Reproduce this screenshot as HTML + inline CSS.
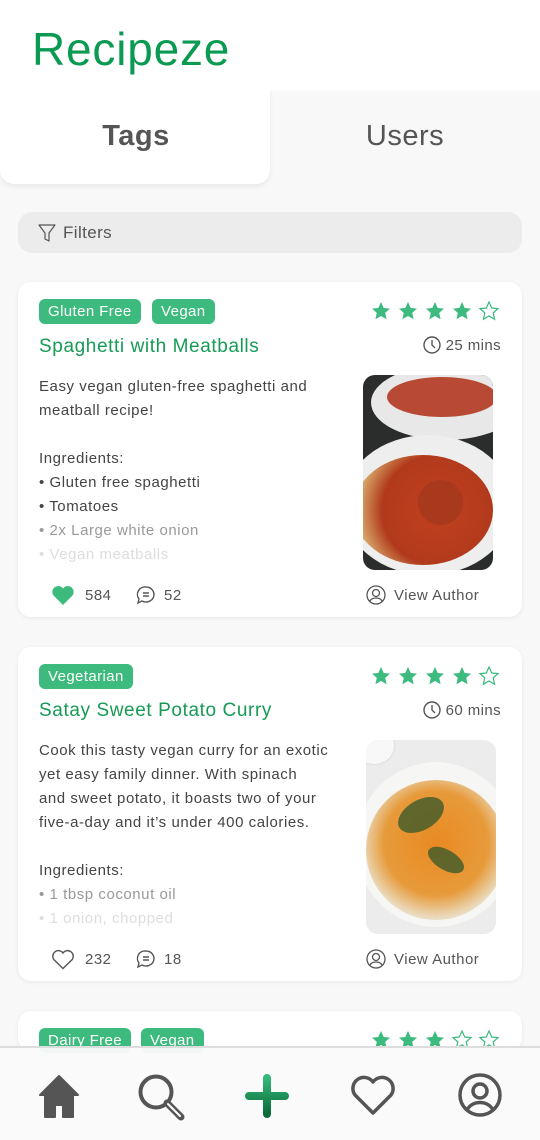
<!DOCTYPE html>
<html><head><meta charset="utf-8">
<style>
*{margin:0;padding:0;box-sizing:border-box}
html{width:540px;height:1140px;overflow:hidden}
body{width:540px;height:1140px;overflow:hidden;background:#f8f8f8;font-family:"Liberation Sans",sans-serif;position:relative;color:#444}
.abs{position:absolute}
.hdr{left:0;top:0;width:540px;height:92px;background:#fff}
.logo{left:32px;top:22px;font-size:46px;color:#0a9a52;letter-spacing:0.8px;font-weight:normal}
.tabbar{left:0;top:92px;width:540px;height:100px;background:#f8f8f8;box-shadow:0 -1px 2px rgba(0,0,0,0.04)}
.tab1{left:0;top:88px;width:270px;height:96px;background:#fff;border-radius:0 0 14px 14px;box-shadow:0 3px 5px rgba(0,0,0,0.06)}
.t{font-size:29px;color:#555;text-align:center;width:270px;letter-spacing:0.5px}
.filter{left:18px;top:212px;width:504px;height:41px;background:#ececec;border-radius:14px}
.card{left:18px;width:504px;background:#fff;border-radius:13px;box-shadow:0 1px 4px rgba(0,0,0,0.07)}
.tag{position:absolute;height:25px;background:#3dba7e;color:#fff;border-radius:6px;font-size:15px;line-height:25px;padding:0 9px;letter-spacing:0.4px}
.title{position:absolute;left:21px;font-size:19px;color:#169b55;letter-spacing:0.6px;white-space:nowrap}
.desc{position:absolute;left:21px;font-size:15px;line-height:24px;color:#444;white-space:nowrap;letter-spacing:0.55px}
.fade1{color:#999}.fade2{color:#ddd}
.stars{position:absolute;left:353px;top:19px}
.time{position:absolute;right:21px;font-size:15px;color:#555;display:flex;align-items:center;gap:5px;letter-spacing:0.4px}
.foot{position:absolute;font-size:15px;color:#555;display:flex;align-items:center;gap:8px;letter-spacing:0.5px}
.img{position:absolute;border-radius:12px;overflow:hidden}
.nav{left:0;top:1046px;width:540px;height:94px;background:rgba(250,250,250,0.96);border-top:2px solid #ddd}
</style></head><body>
<div class="abs hdr"></div>
<div class="abs logo">Recipeze</div>
<div class="abs tabbar"></div>
<div class="abs tab1"></div>
<div class="abs t" style="left:1px;top:120px;font-weight:bold">Tags</div>
<div class="abs t" style="left:270px;top:120px">Users</div>
<div class="abs filter">
<svg class="abs" style="left:20px;top:12px" width="18" height="19" viewBox="0 0 18 19"><path d="M1 1h16l-6 8v8l-4-2V9z" fill="none" stroke="#555" stroke-width="1.2" stroke-linejoin="round"/></svg>
<div class="abs" style="left:45px;top:11px;font-size:17px;color:#555;letter-spacing:0.4px">Filters</div>
</div>

<svg width="0" height="0" style="position:absolute">
<defs>
<path id="st" d="M10 1l2.7 6 6.3.6-4.8 4.3 1.4 6.4L10 15l-5.6 3.3 1.4-6.4L1 7.6 7.3 7z"/>
</defs></svg>

<!-- Card 1 -->
<div class="abs card" style="top:282px;height:335px">
<div class="tag" style="left:21px;top:17px">Gluten Free</div>
<div class="tag" style="left:134px;top:17px">Vegan</div>
<svg class="stars" width="132" height="22" viewBox="0 0 132 22">
<g fill="#3dba7e"><use href="#st" x="0"/><use href="#st" x="27"/><use href="#st" x="54"/><use href="#st" x="81"/></g>
<use href="#st" x="108" fill="none" stroke="#3dba7e" stroke-width="1.2"/></svg>
<div class="title" style="top:54px">Spaghetti with Meatballs</div>
<div class="time" style="top:54px"><svg width="18" height="18" viewBox="0 0 18 18"><circle cx="9" cy="9" r="8" fill="none" stroke="#555" stroke-width="1.4"/><path d="M9 4v5l3 3" fill="none" stroke="#555" stroke-width="1.4"/></svg>25 mins</div>
<div class="desc" style="top:93px">Easy vegan gluten-free spaghetti and<br>meatball recipe!<br><br>Ingredients:<br>• Gluten free spaghetti<br>• Tomatoes<br><span class="fade1">• 2x Large white onion</span><br><span class="fade2">• Vegan meatballs</span></div>
<div class="img" style="left:345px;top:93px;width:130px;height:195px;background:#2a2d2b">
<div class="abs" style="left:8px;top:-10px;width:150px;height:75px;border-radius:50%;background:#e8e8e8"></div>
<div class="abs" style="left:24px;top:2px;width:110px;height:40px;border-radius:50%;background:#b84a35"></div>
<div class="abs" style="left:-20px;top:60px;width:170px;height:140px;border-radius:50%;background:#eeeeee"></div>
<div class="abs" style="left:-10px;top:80px;width:140px;height:110px;border-radius:50%;background:radial-gradient(circle at 60% 50%,#c0401f,#b23a1c 55%,#d9b070 80%)"></div>
<div class="abs" style="left:55px;top:105px;width:45px;height:45px;border-radius:50%;background:#a8391c"></div>
</div>
<div class="foot" style="left:33px;top:303px"><svg width="24" height="21" viewBox="0 0 24 21"><path d="M12 20L2.5 10.5A5.5 5.5 0 0 1 12 3.5a5.5 5.5 0 0 1 9.5 7z" fill="#3dba7e"/></svg><span style="margin-left:2px">584</span></div>
<div class="foot" style="left:118px;top:303px"><svg width="20" height="20" viewBox="0 0 20 20"><path d="M10 2a8 7.5 0 1 1-4 14l-4 2 1-4A7.5 7.5 0 0 1 10 2z" fill="none" stroke="#555" stroke-width="1.4"/><path d="M7 8h6M7 11h6" stroke="#555" stroke-width="1.4"/></svg><span>52</span></div>
<div class="foot" style="left:348px;top:303px"><svg width="20" height="20" viewBox="0 0 20 20"><circle cx="10" cy="10" r="9" fill="none" stroke="#555" stroke-width="1.3"/><circle cx="10" cy="8" r="3.5" fill="none" stroke="#555" stroke-width="1.3"/><path d="M4 16c2-4 10-4 12 0" fill="none" stroke="#555" stroke-width="1.3"/></svg><span>View Author</span></div>
</div>

<!-- Card 2 -->
<div class="abs card" style="top:647px;height:334px">
<div class="tag" style="left:21px;top:17px">Vegetarian</div>
<svg class="stars" width="132" height="22" viewBox="0 0 132 22">
<defs><clipPath id="hl"><rect x="108" y="0" width="10" height="22"/></clipPath></defs>
<g fill="#3dba7e"><use href="#st" x="0"/><use href="#st" x="27"/><use href="#st" x="54"/><use href="#st" x="81"/><use href="#st" x="108" clip-path="url(#hl)"/></g>
<use href="#st" x="108" fill="none" stroke="#3dba7e" stroke-width="1.2"/></svg>
<div class="title" style="top:53px">Satay Sweet Potato Curry</div>
<div class="time" style="top:54px"><svg width="18" height="18" viewBox="0 0 18 18"><circle cx="9" cy="9" r="8" fill="none" stroke="#555" stroke-width="1.4"/><path d="M9 4v5l3 3" fill="none" stroke="#555" stroke-width="1.4"/></svg>60 mins</div>
<div class="desc" style="top:92px">Cook this tasty vegan curry for an exotic<br>yet easy family dinner. With spinach<br>and sweet potato, it boasts two of your<br>five-a-day and it’s under 400 calories.<br><br>Ingredients:<br><span class="fade1">• 1 tbsp coconut oil</span><br><span class="fade2">• 1 onion, chopped</span></div>
<div class="img" style="left:348px;top:93px;width:130px;height:194px;background:#ececec">
<div class="abs" style="left:-12px;top:-12px;width:40px;height:36px;border-radius:50%;background:#f8f8f8;box-shadow:0 0 2px #ccc"></div>
<div class="abs" style="left:-10px;top:22px;width:160px;height:165px;border-radius:50%;background:#f6f6f4"></div>
<div class="abs" style="left:0;top:40px;width:140px;height:140px;border-radius:50%;background:radial-gradient(circle at 50% 45%,#e98a22,#e79a3a 50%,#eadcc0 72%)"></div>
<div class="abs" style="left:30px;top:60px;width:50px;height:30px;background:#3d5a2a;border-radius:50%;transform:rotate(-30deg);opacity:.8"></div>
<div class="abs" style="left:60px;top:110px;width:40px;height:20px;background:#3d5a2a;border-radius:50%;transform:rotate(30deg);opacity:.8"></div>
</div>
<div class="foot" style="left:33px;top:302px"><svg width="24" height="21" viewBox="0 0 24 21"><path d="M12 19.5L2.8 10.5A5.3 5.3 0 0 1 12 4a5.3 5.3 0 0 1 9.2 6.5z" fill="none" stroke="#555" stroke-width="1.4"/></svg><span style="margin-left:2px">232</span></div>
<div class="foot" style="left:118px;top:302px"><svg width="20" height="20" viewBox="0 0 20 20"><path d="M10 2a8 7.5 0 1 1-4 14l-4 2 1-4A7.5 7.5 0 0 1 10 2z" fill="none" stroke="#555" stroke-width="1.4"/><path d="M7 8h6M7 11h6" stroke="#555" stroke-width="1.4"/></svg><span>18</span></div>
<div class="foot" style="left:348px;top:302px"><svg width="20" height="20" viewBox="0 0 20 20"><circle cx="10" cy="10" r="9" fill="none" stroke="#555" stroke-width="1.3"/><circle cx="10" cy="8" r="3.5" fill="none" stroke="#555" stroke-width="1.3"/><path d="M4 16c2-4 10-4 12 0" fill="none" stroke="#555" stroke-width="1.3"/></svg><span>View Author</span></div>
</div>

<!-- Card 3 -->
<div class="abs card" style="top:1011px;height:40px">
<div class="tag" style="left:21px;top:17px">Dairy Free</div>
<div class="tag" style="left:123px;top:17px">Vegan</div>
<svg class="stars" width="132" height="22" viewBox="0 0 132 22">
<g fill="#3dba7e"><use href="#st" x="0"/><use href="#st" x="27"/><use href="#st" x="54"/></g>
<g fill="none" stroke="#3dba7e" stroke-width="1.2"><use href="#st" x="81"/><use href="#st" x="108"/></g></svg>
</div>

<div class="abs nav">
<svg class="abs" style="left:37px;top:26px" width="44" height="44" viewBox="0 0 44 44"><path d="M22 2L3 21h5v22h10V31h8v12h10V21h5z" fill="#555" stroke="#555" stroke-width="2" stroke-linejoin="round"/></svg>
<svg class="abs" style="left:136px;top:24px" width="52" height="52" viewBox="0 0 52 52"><circle cx="20" cy="20" r="15.5" fill="none" stroke="#555" stroke-width="4"/><path d="M31 31l14 14" stroke="#555" stroke-width="7" stroke-linecap="round"/><path d="M32 32l12 12" stroke="#fff" stroke-width="2" stroke-linecap="round"/></svg>
<svg class="abs" style="left:243px;top:26px" width="48" height="48" viewBox="0 0 48 48"><defs><linearGradient id="pg" x1="0" y1="0" x2="0" y2="1"><stop offset="0" stop-color="#35b87a"/><stop offset="1" stop-color="#0a6a38"/></linearGradient></defs><path d="M24 4v36M6 22h36" stroke="url(#pg)" stroke-width="8" stroke-linecap="round"/></svg>
<svg class="abs" style="left:350px;top:26px" width="46" height="42" viewBox="0 0 46 42"><path d="M23 39L5 21A10 10 0 0 1 23 8a10 10 0 0 1 18 13z" fill="none" stroke="#555" stroke-width="3.5" stroke-linejoin="round"/></svg>
<svg class="abs" style="left:457px;top:24px" width="46" height="46" viewBox="0 0 46 46"><circle cx="23" cy="23" r="20" fill="none" stroke="#555" stroke-width="3.5"/><circle cx="23" cy="19" r="7" fill="none" stroke="#555" stroke-width="3.5"/><path d="M10 38c5-10 21-10 26 0" fill="none" stroke="#555" stroke-width="3.5"/></svg>
</div>
</body></html>
